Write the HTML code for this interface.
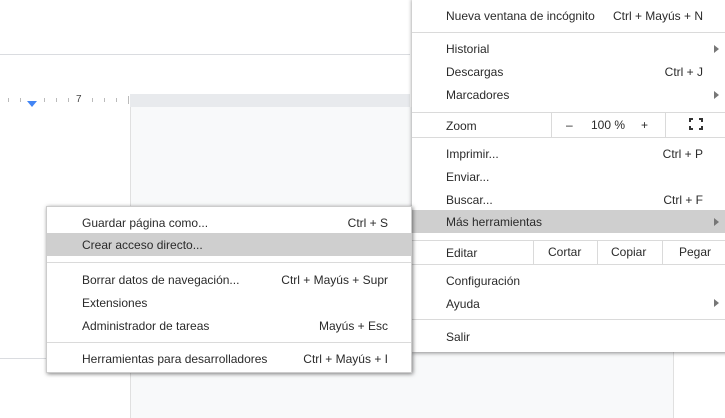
<!DOCTYPE html><html><head><meta charset="utf-8"><style>
body{margin:0;width:725px;height:418px;overflow:hidden;position:relative;background:#fff;font-family:"Liberation Sans",sans-serif;font-size:12px;color:#2a2a2a}
.a{position:absolute}
.t{position:absolute;white-space:nowrap;line-height:14px}
.r{position:absolute;white-space:nowrap;line-height:14px;text-align:right}
.hl{position:absolute;background:#e0e0e0}
.sep{position:absolute;height:1px;background:#dadada}
.arr{position:absolute;width:0;height:0;border-left:5px solid #777;border-top:4px solid transparent;border-bottom:4px solid transparent}
.tk{position:absolute;top:98px;width:1px;height:4px;background:#bbb}
</style></head><body>
<div class="a" style="left:0;top:54px;width:410px;height:1px;background:#dadce0"></div>
<div class="a" style="left:0;top:94px;width:410px;height:13px;background:#e8eaed"></div>
<div class="a" style="left:0;top:94px;width:130px;height:13px;background:#fff"></div>
<div class="tk" style="left:8px"></div><div class="tk" style="left:20px"></div><div class="tk" style="left:44px"></div><div class="tk" style="left:56px"></div><div class="tk" style="left:68px"></div><div class="tk" style="left:92px"></div><div class="tk" style="left:104px"></div><div class="tk" style="left:116px"></div><div class="tk" style="left:128px;top:96px;height:8px"></div>
<div class="t" style="left:76px;top:93px;font-size:10px;color:#444">7</div>
<div class="a" style="left:27px;top:101px;width:0;height:0;border-left:5px solid transparent;border-right:5px solid transparent;border-top:6px solid #4285f4"></div>
<div class="a" style="left:130px;top:107px;width:543px;height:311px;background:#f8f9fa;border-left:1px solid #e0e0e0"></div>
<div class="a" style="left:673px;top:352px;width:1px;height:66px;background:#e0e0e0"></div>
<div class="a" style="left:0;top:358px;width:130px;height:1px;background:#dadce0"></div>

<div class="a" style="left:412px;top:-2px;width:320px;height:354px;background:#fff;box-shadow:0 1px 4px rgba(0,0,0,.45)"></div>
<div class="t" style="left:446px;top:9px">Nueva ventana de incógnito</div><div class="r" style="right:22px;top:9px">Ctrl + Mayús + N</div>
<div class="sep" style="left:412px;top:32px;width:313px"></div>
<div class="t" style="left:446px;top:42px">Historial</div><div class="arr" style="left:714px;top:45px"></div>
<div class="t" style="left:446px;top:65px">Descargas</div><div class="r" style="right:22px;top:65px">Ctrl + J</div>
<div class="t" style="left:446px;top:88px">Marcadores</div><div class="arr" style="left:714px;top:91px"></div>
<div class="sep" style="left:412px;top:112px;width:313px"></div>
<div class="t" style="left:446px;top:119px">Zoom</div>
<div class="a" style="left:551px;top:112px;width:1px;height:25px;background:#dadada"></div>
<div class="t" style="left:566px;top:118px">–</div><div class="t" style="left:591px;top:118px">100 %</div><div class="t" style="left:641px;top:118px">+</div>
<div class="a" style="left:665px;top:112px;width:1px;height:25px;background:#dadada"></div>
<svg class="a" style="left:689px;top:118px" width="14" height="12" viewBox="0 0 14 12" fill="none" stroke="#333" stroke-width="2"><path d="M1 4V1H4M10 1H13V4M13 8V11H10M4 11H1V8"/></svg>
<div class="sep" style="left:412px;top:137px;width:313px"></div>
<div class="t" style="left:446px;top:147px">Imprimir...</div><div class="r" style="right:22px;top:147px">Ctrl + P</div>
<div class="t" style="left:446px;top:170px">Enviar...</div>
<div class="t" style="left:446px;top:193px">Buscar...</div><div class="r" style="right:22px;top:193px">Ctrl + F</div>
<div class="hl" style="left:412px;top:210px;width:313px;height:23px;background:#cfcfcf"></div>
<div class="t" style="left:446px;top:215px">Más herramientas</div><div class="arr" style="left:714px;top:218px"></div>
<div class="sep" style="left:412px;top:240px;width:313px"></div>
<div class="t" style="left:446px;top:246px">Editar</div>
<div class="a" style="left:533px;top:240px;width:1px;height:24px;background:#dadada"></div>
<div class="t" style="left:548px;top:245px">Cortar</div>
<div class="a" style="left:597px;top:240px;width:1px;height:24px;background:#dadada"></div>
<div class="t" style="left:611px;top:245px">Copiar</div>
<div class="a" style="left:662px;top:240px;width:1px;height:24px;background:#dadada"></div>
<div class="t" style="left:679px;top:245px">Pegar</div>
<div class="sep" style="left:412px;top:264px;width:313px"></div>
<div class="t" style="left:446px;top:274px">Configuración</div>
<div class="t" style="left:446px;top:297px">Ayuda</div><div class="arr" style="left:714px;top:299px"></div>
<div class="sep" style="left:412px;top:319px;width:313px"></div>
<div class="t" style="left:446px;top:330px">Salir</div>

<div class="a" style="left:46px;top:206px;width:366px;height:167px;background:#fff;box-shadow:1px 1px 4px rgba(0,0,0,.5);border:1px solid #ccc;box-sizing:border-box"></div>
<div class="t" style="left:82px;top:216px">Guardar página como...</div><div class="r" style="right:337px;top:216px">Ctrl + S</div>
<div class="hl" style="left:47px;top:233px;width:364px;height:23px;background:#cfcfcf"></div>
<div class="t" style="left:82px;top:238px">Crear acceso directo...</div>
<div class="sep" style="left:47px;top:262px;width:364px"></div>
<div class="t" style="left:82px;top:273px">Borrar datos de navegación...</div><div class="r" style="right:337px;top:273px">Ctrl + Mayús + Supr</div>
<div class="t" style="left:82px;top:296px">Extensiones</div>
<div class="t" style="left:82px;top:319px">Administrador de tareas</div><div class="r" style="right:337px;top:319px">Mayús + Esc</div>
<div class="sep" style="left:47px;top:342px;width:364px"></div>
<div class="t" style="left:82px;top:352px">Herramientas para desarrolladores</div><div class="r" style="right:337px;top:352px">Ctrl + Mayús + I</div>
</body></html>
